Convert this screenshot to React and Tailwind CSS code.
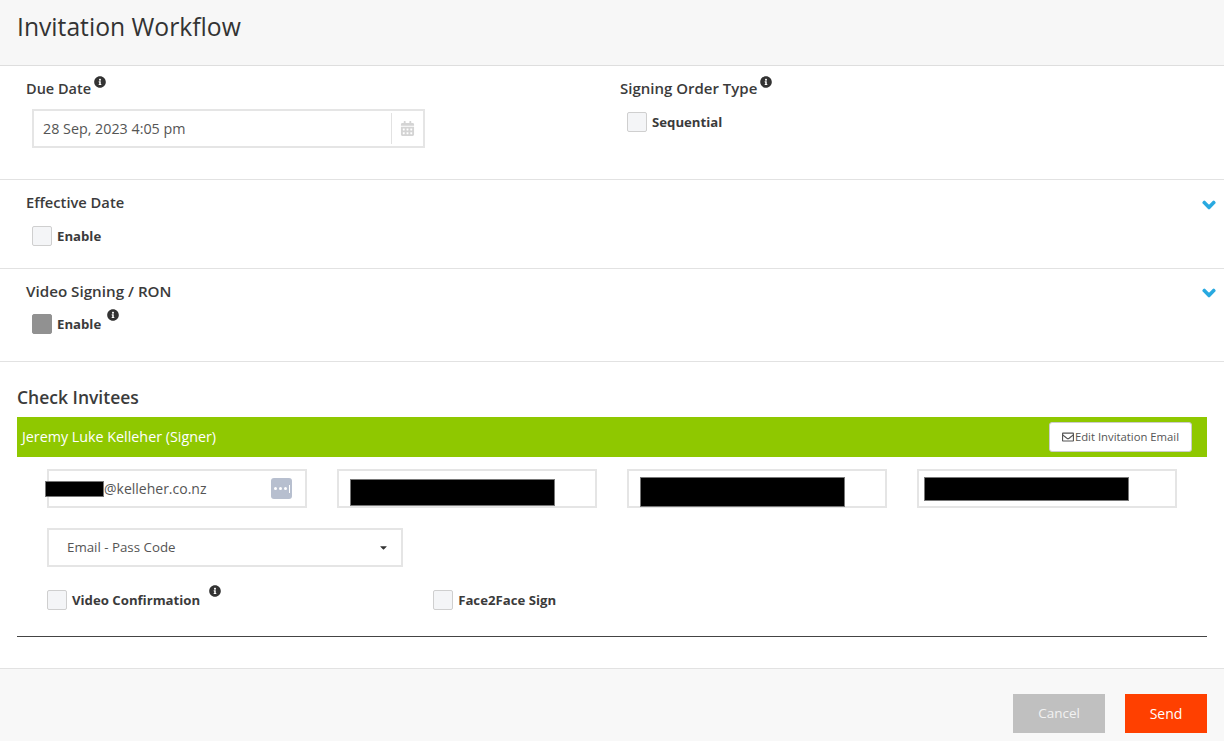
import React from 'react';
import { FaInfoCircle, FaCalendarAlt, FaChevronDown, FaRegEnvelope, FaCaretDown } from 'react-icons/fa';

const Info = ({ className }) => <FaInfoCircle className={`text-[12px] text-[#333] ${className}`} />;

const Chevron = ({ className }) => (
  <FaChevronDown className={`absolute right-[8px] text-[14px] text-[#29a9e0] stroke-[50] ${className}`} />
);

const Check = ({ label, dark, className = '' }) => (
  <div className={`flex items-center ${className}`}>
    <span
      className={`w-5 h-5 rounded-[2px] border ${
        dark ? 'bg-[#919191] border-[#919191]' : 'bg-[#f4f5f7] border-[#cfcfcf]'
      }`}
    />
    <span className="ml-[5px] text-[13.2px] font-bold text-[#3b3b3b] leading-5">{label}</span>
  </div>
);

const Redacted = ({ className }) => <div className={`bg-black border border-[#777] ${className}`} />;

const Field = ({ children }) => (
  <div className="w-[260px] h-[39px] border-2 border-[#e5e5e5] bg-white flex items-center">{children}</div>
);

const App = () => {
  return (
    <div className="w-[1224px] h-[741px] bg-white flex flex-col overflow-hidden font-['Open_Sans',sans-serif] text-[#3b3b3b]">
      <header className="h-[66px] shrink-0 bg-[#f7f7f7] border-b border-[#dedede] pl-[17px] pt-[10px]">
        <h1 className="text-[24.7px] leading-[34px] text-[#333]">Invitation Workflow</h1>
      </header>

      <section className="h-[114px] shrink-0 border-b border-[#e2e2e2] flex">
        <div className="w-[620px] pl-[26px] pt-[12px]">
          <div className="flex items-start h-[22px]">
            <h2 className="text-[14.5px] font-semibold leading-[22px]">Due Date</h2>
            <Info className="ml-[3px] mt-[-2px]" />
          </div>
          <div className="ml-[6px] mt-[9px] w-[393px] h-[39px] border-2 border-[#e5e5e5] flex items-center">
            <span className="flex-1 pl-[9px] text-[14.3px] text-[#555]">28 Sep, 2023 4:05 pm</span>
            <span className="w-[32px] h-[31px] border-l border-[#e2e2e2] flex items-center justify-center">
              <FaCalendarAlt className="text-[15px] text-[#d4d4d4]" />
            </span>
          </div>
        </div>
        <div className="pt-[11px]">
          <div className="flex items-start h-[22px]">
            <h2 className="text-[15px] font-semibold leading-[22px]">Signing Order Type</h2>
            <Info className="ml-[3px] mt-[-1px]" />
          </div>
          <Check label="Sequential" className="ml-[7px] mt-[13px]" />
        </div>
      </section>

      <section className="h-[89px] shrink-0 border-b border-[#e2e2e2] pl-[26px] pt-[11px] relative">
        <h2 className="text-[14.7px] font-semibold leading-[22px]">Effective Date</h2>
        <Check label="Enable" className="ml-[6px] mt-[13px]" />
        <Chevron className="top-[18px]" />
      </section>

      <section className="h-[93px] shrink-0 border-b border-[#e2e2e2] pl-[26px] pt-[11px] relative">
        <h2 className="text-[15.2px] font-semibold leading-[22px]">Video Signing / RON</h2>
        <div className="flex items-start ml-[6px] mt-[12px]">
          <Check label="Enable" dark />
          <Info className="ml-[6px] mt-[-5px]" />
        </div>
        <Chevron className="top-[17px]" />
      </section>

      <section className="flex-1 px-[17px] pt-[23px]">
        <h2 className="text-[17.5px] font-semibold leading-[24px]">Check Invitees</h2>
        <div className="mt-[8px] h-[40px] bg-[#8fc800] flex items-center justify-between pl-[5px] pr-[15px]">
          <span className="text-[14.3px] text-white">Jeremy Luke Kelleher (Signer)</span>
          <button className="h-[30px] w-[143px] bg-white border border-[#ccc] rounded-[3px] flex items-center justify-center text-[11.3px] text-[#555]">
            <FaRegEnvelope className="text-[12px] mr-[1px]" />
            Edit Invitation Email
          </button>
        </div>

        <div className="mt-[12px] ml-[30px] flex gap-[30px]">
          <Field>
            <Redacted className="w-[59px] h-[16px] ml-[-4px]" />
            <span className="flex-1 text-[14px] text-[#555]">@kelleher.co.nz</span>
            <span className="w-[21px] h-[21px] mr-[13px] rounded-[3px] bg-[#b7bfcf] flex items-center justify-center gap-[2px]">
              <i className="w-[3px] h-[3px] bg-white rounded-full" />
              <i className="w-[3px] h-[3px] bg-white rounded-full" />
              <i className="w-[3px] h-[3px] bg-white rounded-full" />
              <i className="w-[1px] h-[8px] bg-white" />
            </span>
          </Field>
          <Field>
            <Redacted className="w-[205px] h-[27px] ml-[11px] mt-[7px]" />
          </Field>
          <Field>
            <Redacted className="w-[205px] h-[30px] ml-[11px] mt-[6px]" />
          </Field>
          <Field>
            <Redacted className="w-[205px] h-[24px] ml-[5px] mt-[1px]" />
          </Field>
        </div>

        <div className="mt-[20px] ml-[30px] w-[356px] h-[39px] border-2 border-[#e5e5e5] flex items-center justify-between pl-[18px] pr-[12px]">
          <span className="text-[13.3px] text-[#555]">Email - Pass Code</span>
          <FaCaretDown className="text-[11px] text-[#333]" />
        </div>

        <div className="mt-[23px] ml-[30px] flex items-start">
          <Check label="Video Confirmation" />
          <Info className="ml-[9px] mt-[-5px]" />
          <Check label="Face2Face Sign" className="ml-[212px]" />
        </div>

        <hr className="mt-[26px] border-t border-[#444]" />
      </section>

      <footer className="h-[73px] shrink-0 bg-[#f8f8f8] border-t border-[#e2e2e2] flex justify-end items-start gap-[20px] pt-[25px] pr-[17px]">
        <button className="w-[92px] h-[39px] bg-[#c0c0c0] text-[13.5px] text-[#f2f2f2]">Cancel</button>
        <button className="w-[82px] h-[39px] bg-[#ff4000] text-[14px] text-white">Send</button>
      </footer>
    </div>
  );
};

export default App;
